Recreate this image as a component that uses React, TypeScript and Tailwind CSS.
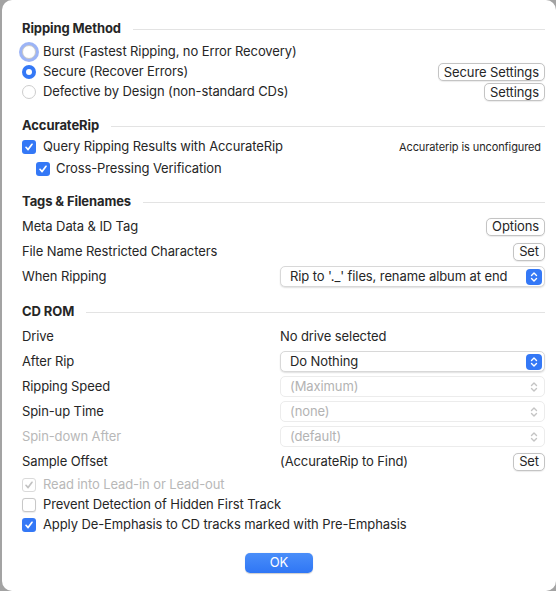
import React from "react";

const font = { fontFamily: "Inter, 'Liberation Sans', sans-serif" };

function Heading({ children }: { children: React.ReactNode }) {
  return (
    <div className="flex items-center h-5 gap-3">
      <span className="font-bold text-[13px] text-[#262626]">{children}</span>
      <div className="flex-1 h-px bg-[#e3e3e3]" />
    </div>
  );
}

function Button({ children }: { children: React.ReactNode }) {
  return (
    <div className="h-[18px] px-[5px] flex items-center rounded-[5px] border border-[#c4c4c4] bg-white text-[13px] text-[#262626] shadow-[0_0.5px_1px_rgba(0,0,0,0.08)] leading-none">
      {children}
    </div>
  );
}

function Chevrons({ color }: { color: string }) {
  return (
    <svg width="8" height="12" viewBox="0 0 8 12" fill="none" stroke={color} strokeWidth="1.4" strokeLinecap="round" strokeLinejoin="round">
      <path d="M1.5 4.5 L4 2 L6.5 4.5" />
      <path d="M1.5 7.5 L4 10 L6.5 7.5" />
    </svg>
  );
}

function Select({ children, disabled }: { children: React.ReactNode; disabled?: boolean }) {
  return (
    <div
      className={
        "w-[265px] h-[21px] flex items-center justify-between pl-[9px] pr-[2px] rounded-[5px] bg-white text-[13px] " +
        (disabled
          ? "border border-[#ececec] text-[#b3b3b3]"
          : "border border-[#d8d8d8] text-[#262626] shadow-[0_1px_1.5px_rgba(0,0,0,0.12)]")
      }
    >
      <span>{children}</span>
      {disabled ? (
        <div className="w-[16px] h-[16px] flex items-center justify-center">
          <Chevrons color="#c4c4c4" />
        </div>
      ) : (
        <div className="w-[16px] h-[16px] rounded-[4px] bg-[#3478f6] flex items-center justify-center">
          <Chevrons color="#ffffff" />
        </div>
      )}
    </div>
  );
}

function Check({ state }: { state: "on" | "off" | "disabled" }) {
  if (state === "off") {
    return <div className="w-[14px] h-[14px] rounded-[3px] border border-[#c8c8c8] bg-white shadow-[0_0.5px_1px_rgba(0,0,0,0.08)]" />;
  }
  const disabled = state === "disabled";
  return (
    <div
      className={
        "w-[14px] h-[14px] rounded-[3px] flex items-center justify-center " +
        (disabled ? "border border-[#dadada] bg-white" : "bg-[#3478f6]")
      }
    >
      <svg width="10" height="10" viewBox="0 0 10 10" fill="none" stroke={disabled ? "#c2c2c2" : "#ffffff"} strokeWidth="1.7" strokeLinecap="round" strokeLinejoin="round">
        <path d="M2 5.3 L4.1 7.6 L8 2.3" />
      </svg>
    </div>
  );
}

function Radio({ state }: { state: "focus" | "on" | "off" }) {
  if (state === "on") {
    return (
      <div className="w-[14px] h-[14px] rounded-full bg-[#3478f6] flex items-center justify-center">
        <div className="w-[6px] h-[6px] rounded-full bg-white" />
      </div>
    );
  }
  if (state === "focus") {
    return (
      <div className="w-[14px] h-[14px] rounded-full bg-white border border-[#c8c8c8] shadow-[0_0_0_3px_rgba(90,130,240,0.6)]" />
    );
  }
  return <div className="w-[14px] h-[14px] rounded-full bg-white border border-[#cdcdcd]" />;
}

function FormRow({ label, children, disabled }: { label: string; children?: React.ReactNode; disabled?: boolean }) {
  return (
    <div className="h-[25px] flex items-center">
      <div className={"w-[258px] text-[13px] " + (disabled ? "text-[#b8b8b8]" : "text-[#262626]")}>{label}</div>
      <div className="flex-1 flex items-center">{children}</div>
    </div>
  );
}

export default function App() {
  return (
    <div className="w-[556px] h-[591px] bg-[#a3a3a3] pl-[2px] tracking-[-0.1px]" style={font}>
      <div className="w-full h-full bg-white rounded-[10px] pl-[20px] pr-[11px] pt-[19px] flex flex-col text-[#262626]">
        <Heading>Ripping Method</Heading>
        <div className="mt-[3px] flex flex-col">
          <div className="h-[20px] flex items-center gap-[7px] text-[13px]">
            <Radio state="focus" />
            <span>Burst (Fastest Ripping, no Error Recovery)</span>
          </div>
          <div className="h-[20px] flex items-center gap-[7px] text-[13px]">
            <Radio state="on" />
            <span className="flex-1">Secure (Recover Errors)</span>
            <Button>Secure Settings</Button>
          </div>
          <div className="h-[20px] flex items-center gap-[7px] text-[13px]">
            <Radio state="off" />
            <span className="flex-1">Defective by Design (non-standard CDs)</span>
            <Button>Settings</Button>
          </div>
        </div>

        <div className="mt-[14px]">
          <Heading>AccurateRip</Heading>
        </div>
        <div className="mt-[1px] h-[20px] flex items-center gap-[7px] text-[13px]">
          <Check state="on" />
          <span className="flex-1">Query Ripping Results with AccurateRip</span>
          <span className="text-[11px] pr-[4px]">Accuraterip is unconfigured</span>
        </div>
        <div className="mt-[2px] h-[20px] flex items-center gap-[6px] text-[13px] pl-[14px]">
          <Check state="on" />
          <span>Cross-Pressing Verification</span>
        </div>

        <div className="mt-[13px]">
          <Heading>Tags &amp; Filenames</Heading>
        </div>
        <div className="mt-[2px]">
          <FormRow label="Meta Data & ID Tag">
            <div className="flex-1" />
            <Button>Options</Button>
          </FormRow>
          <FormRow label="File Name Restricted Characters">
            <div className="flex-1" />
            <Button>Set</Button>
          </FormRow>
          <FormRow label="When Ripping">
            <Select>Rip to '._' files, rename album at end</Select>
          </FormRow>
        </div>

        <div className="mt-[13px]">
          <Heading>CD ROM</Heading>
        </div>
        <div className="mt-[2px]">
          <FormRow label="Drive">
            <span className="text-[13px]">No drive selected</span>
          </FormRow>
          <FormRow label="After Rip">
            <Select>Do Nothing</Select>
          </FormRow>
          <FormRow label="Ripping Speed">
            <Select disabled>(Maximum)</Select>
          </FormRow>
          <FormRow label="Spin-up Time">
            <Select disabled>(none)</Select>
          </FormRow>
          <FormRow label="Spin-down After" disabled>
            <Select disabled>(default)</Select>
          </FormRow>
          <FormRow label="Sample Offset">
            <span className="text-[13px] flex-1">(AccurateRip to Find)</span>
            <Button>Set</Button>
          </FormRow>
        </div>

        <div className="mt-[1px] flex flex-col">
          <div className="h-[20px] flex items-center gap-[7px] text-[13px] text-[#b8b8b8]">
            <Check state="disabled" />
            <span>Read into Lead-in or Lead-out</span>
          </div>
          <div className="h-[20px] flex items-center gap-[7px] text-[13px]">
            <Check state="off" />
            <span>Prevent Detection of Hidden First Track</span>
          </div>
          <div className="h-[20px] flex items-center gap-[7px] text-[13px]">
            <Check state="on" />
            <span>Apply De-Emphasis to CD tracks marked with Pre-Emphasis</span>
          </div>
        </div>

        <div className="mt-[18px] flex justify-center pr-[9px]">
          <div className="w-[68px] h-[20px] rounded-[5px] bg-gradient-to-b from-[#4a8ef9] to-[#2f76f5] text-white text-[13px] flex items-center justify-center shadow-[0_0.5px_1px_rgba(0,0,0,0.2)]">
            OK
          </div>
        </div>
      </div>
    </div>
  );
}
